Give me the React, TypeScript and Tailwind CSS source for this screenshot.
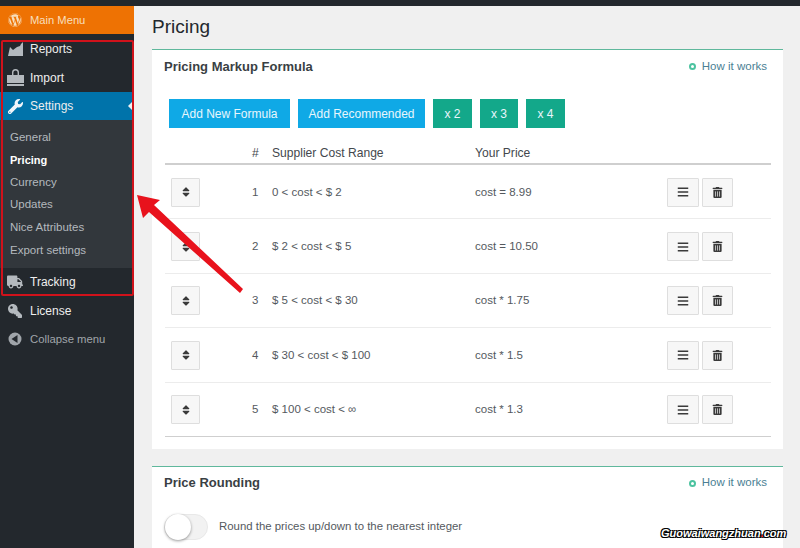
import React from 'react';
import { FaWordpress, FaWrench, FaTruck, FaKey, FaSort, FaBars, FaTrashAlt } from 'react-icons/fa';

const submenu = ['General', 'Pricing', 'Currency', 'Updates', 'Nice Attributes', 'Export settings'];

const rows = [
  { id: 1, range: '0 < cost < $ 2', price: 'cost = 8.99' },
  { id: 2, range: '$ 2 < cost < $ 5', price: 'cost = 10.50' },
  { id: 3, range: '$ 5 < cost < $ 30', price: 'cost * 1.75' },
  { id: 4, range: '$ 30 < cost < $ 100', price: 'cost * 1.5' },
  { id: 5, range: '$ 100 < cost < ∞', price: 'cost * 1.3' },
];

const ReportsIcon = () => (
  <svg width="15" height="14" viewBox="0 0 15 14" fill="#b4b9be">
    <path d="M0 14L2 5l3 3 4-3 3-1 1-2 2-2v14z" />
  </svg>
);

const ImportIcon = () => (
  <svg width="17" height="17" viewBox="0 0 17 17" fill="#b4b9be">
    <path d="M0 6h17v8H0z" />
    <path d="M0 15h17v2H0z" />
    <path d="M5 6V3.5a3.5 3.5 0 0 1 7 0V6h-1.4V3.5a2.1 2.1 0 0 0-4.2 0V6z" />
  </svg>
);

const CollapseIcon = () => (
  <svg width="14" height="14" viewBox="0 0 14 14">
    <circle cx="7" cy="7" r="6.5" fill="#a0a5aa" />
    <path d="M9.5 3v8L3.5 7z" fill="#23282d" />
  </svg>
);

const HowItWorks = () => (
  <a className="flex items-center gap-[6px] text-[11.5px] text-[#4b7f94]">
    <span className="w-[7px] h-[7px] rounded-full border-2 border-[#4cc3a0]" />
    How it works
  </a>
);

const IconButton = ({ w, children }: { w: string; children: React.ReactNode }) => (
  <button className={`${w} h-[29px] flex items-center justify-center bg-[#f7f7f7] border border-[#dedede] text-[#3a3a3a] rounded-[1px]`}>
    {children}
  </button>
);

const MenuItem = ({ icon, label, color = 'text-[#eeeeee]', size = 'text-[12px]' }: { icon: React.ReactNode; label: string; color?: string; size?: string }) => (
  <div className={`h-[28.5px] flex items-center ${color} ${size}`}>
    <span className="w-[30px] flex justify-center shrink-0">{icon}</span>
    {label}
  </div>
);

export default function App() {
  return (
    <div className="relative w-[800px] h-[548px] overflow-hidden bg-[#f0f0f0] font-['Liberation_Sans',Arial,sans-serif] flex flex-col">
      <div className="h-[6px] bg-[#23282d] shrink-0" />
      <div className="flex flex-1 min-h-0">
        <aside className="w-[134px] shrink-0 bg-[#23282d]">
          <div className="h-[28px] bg-[#ee7203] flex items-center text-[#f8dfbd] text-[11.2px] mb-[1px]">
            <span className="w-[30px] flex justify-center shrink-0"><FaWordpress size={14} /></span>
            Main Menu
          </div>
          <MenuItem icon={<ReportsIcon />} label="Reports" />
          <MenuItem icon={<ImportIcon />} label="Import" />
          <div className="relative h-[28px] bg-[#0073aa] flex items-center text-[#eeeeee] text-[12px]">
            <span className="w-[30px] flex justify-center shrink-0"><FaWrench size={15} color="#f0f5fa" /></span>
            Settings
            <span className="absolute right-0 top-[8px] border-y-[6px] border-y-transparent border-r-[6px] border-r-[#f1f1f1]" />
          </div>
          <ul className="h-[148px] bg-[#32373c] pt-[6px] pl-[10px] text-[11.5px] text-[#b4b9be]">
            {submenu.map(item => (
              <li key={item} className={`h-[22.6px] flex items-center ${item === 'Pricing' ? 'font-bold text-white text-[11px]' : ''}`}>
                {item}
              </li>
            ))}
          </ul>
          <MenuItem icon={<FaTruck size={16} color="#b4b9be" />} label="Tracking" />
          <MenuItem icon={<FaKey size={14} color="#b4b9be" className="-scale-x-100" />} label="License" />
          <MenuItem icon={<CollapseIcon />} label="Collapse menu" color="text-[#a0a5aa]" size="text-[11.3px]" />
        </aside>

        <main className="flex-1 min-w-0 pl-[18px] pr-[17px]">
          <h1 className="h-[43px] flex items-center text-[19px] text-[#23282d]">Pricing</h1>

          <section className="h-[400px] bg-white border-t border-[#5fb89c] px-[12px]">
            <div className="flex justify-between items-center h-[33px]">
              <h2 className="text-[13px] font-bold text-[#3a3f44]">Pricing Markup Formula</h2>
              <div className="pr-[4px]"><HowItWorks /></div>
            </div>
            <div className="flex gap-[8px] mt-[16px] pl-[5px] text-[12px] text-[#e8f6fc]">
              <button className="w-[121px] h-[29px] bg-[#0fa9e6]">Add New Formula</button>
              <button className="w-[127px] h-[29px] bg-[#0fa9e6]">Add Recommended</button>
              <button className="w-[39px] h-[29px] bg-[#13a88a]">x 2</button>
              <button className="w-[38px] h-[29px] bg-[#13a88a]">x 3</button>
              <button className="w-[39px] h-[29px] bg-[#13a88a]">x 4</button>
            </div>
            <div className="ml-[1px] w-[606px] h-[37px] pb-[1px] flex items-end border-b-2 border-[#cfcfcf] text-[12.1px] text-[#43484d]">
              <span className="w-[87px] shrink-0" />
              <span className="w-[20px] shrink-0">#</span>
              <span className="w-[203px] shrink-0">Supplier Cost Range</span>
              <span>Your Price</span>
            </div>
            <div className="ml-[1px] w-[606px]">
              {rows.map(row => (
                <div key={row.id} className={`h-[54.4px] pt-[1px] flex items-center text-[11.5px] text-[#54595e] border-b ${row.id === 5 ? 'border-[#cfcfcf]' : 'border-[#ececec]'}`}>
                  <span className="w-[87px] pl-[6px] shrink-0">
                    <IconButton w="w-[29px]"><FaSort size={12} /></IconButton>
                  </span>
                  <span className="w-[20px] shrink-0">{row.id}</span>
                  <span className="w-[203px] shrink-0">{row.range}</span>
                  <span className="w-[192px] shrink-0">{row.price}</span>
                  <span className="flex gap-[3px]">
                    <IconButton w="w-[32px]"><FaBars size={12} /></IconButton>
                    <IconButton w="w-[31px]"><FaTrashAlt size={11} /></IconButton>
                  </span>
                </div>
              ))}
            </div>
          </section>

          <section className="mt-[17px] h-[90px] bg-white border-t border-[#5fb89c] px-[12px]">
            <div className="flex justify-between items-center h-[32px]">
              <h2 className="text-[13px] font-bold text-[#3a3f44]">Price Rounding</h2>
              <div className="pr-[4px]"><HowItWorks /></div>
            </div>
            <div className="flex items-center gap-[11px] mt-[15px] text-[11.4px] text-[#54595e]">
              <span className="relative w-[44px] h-[26px] rounded-full bg-[#f2f2f2] border border-[#e8e8e8]">
                <span className="absolute left-0 top-[-1px] w-[26px] h-[26px] rounded-full bg-white shadow-[0_1px_3px_rgba(0,0,0,0.4)]" />
              </span>
              Round the prices up/down to the nearest integer
            </div>
          </section>
        </main>
      </div>

      {/* annotation overlay */}
      <div className="absolute left-[1px] top-[40px] w-[133px] h-[256px] border-2 border-[#d0121b] rounded-[2px]" />
      <svg className="absolute left-0 top-0" width="800" height="548" viewBox="0 0 800 548">
        <path d="M137 195 L160 200 L154 205 L243 289 L240 293 L149 212 L143 218 Z" fill="#e8121c" />
      </svg>
      <span className="absolute left-[661px] top-[525px] text-[11px] font-bold italic text-white [text-shadow:1px_1px_0_#000,-1px_-1px_0_#000,1px_-1px_0_#000,-1px_1px_0_#000]">
        Guowaiwangzhuan<span className="text-[#e8121c]">.</span>com
      </span>
    </div>
  );
}
